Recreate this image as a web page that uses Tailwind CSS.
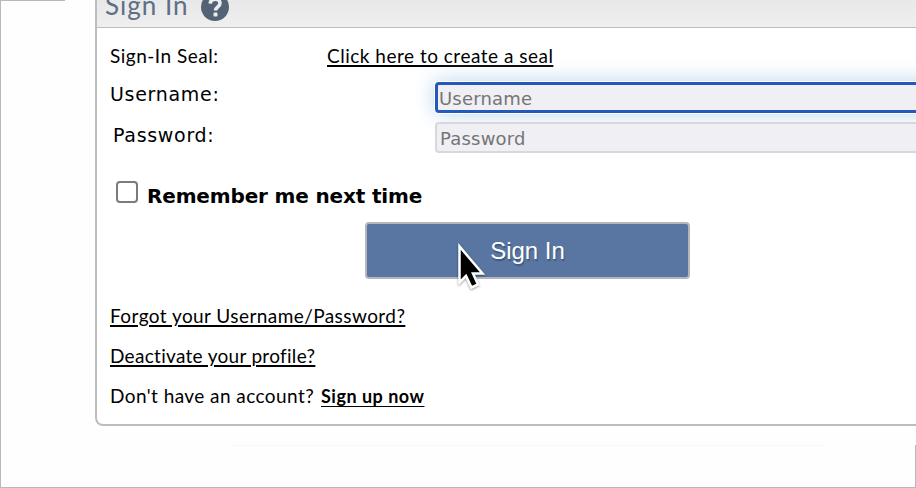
<!DOCTYPE html>
<html lang="en">
<head>
    <meta charset="UTF-8">
    <meta name="viewport" content="width=device-width, initial-scale=1.0">
    <title>Sign In</title>
    <script src="https://cdn.jsdelivr.net/npm/@tailwindcss/browser@4"></script>
</head>
<body class="bg-white">
    <div class="relative w-[916px] h-[488px] overflow-hidden border-l border-b border-[#b8b8b8] bg-[#fefefe] text-black">
      <!-- Page frame lines -->
      <div class="absolute top-0 left-0 w-16 h-px bg-[#b8b8b8]"></div>
      <div class="absolute top-[445px] left-[231px] w-[592px] h-px bg-[#f7f7f7]"></div>
      <div class="absolute bottom-0 right-0 w-px h-[42px] bg-[#b8b8b8]"></div>

      <main class="ml-[94px] w-[840px] h-[426px] border-2 border-t-0 border-[#bdbdbd] rounded-b-lg bg-white overflow-hidden">
        <header class="flex items-start h-7 bg-linear-to-b from-[#e8e8e8] to-[#efefef] border-b border-[#bdbdbd] pl-2">
          <h1 class="-mt-[10px] w-[96px] whitespace-nowrap font-[Lato,sans-serif] text-[26px] leading-[30px] tracking-[1px] text-[#5d6f84]">Sign In</h1>
          <svg class="-mt-[7px] w-7 h-7" viewBox="0 0 28 28">
            <circle cx="14" cy="14" r="14" fill="#536275"/>
            <path d="M9.2 10.6C9.5 7.6 11.5 6.2 14.3 6.2c2.8 0 4.7 1.6 4.7 4 0 3.8-4.500 3.500-4.500 7.300" fill="none" stroke="#ececec" stroke-width="3.600"/>
            <rect x="12.500" y="19.500" width="4" height="4" rx="1" fill="#ececec"/>
          </svg>
        </header>

        <form class="pl-[13px]">
          <div class="flex items-center h-[38px] pt-[18px] font-[Lato,sans-serif] text-[19px] leading-6">
            <span class="w-[217px] tracking-[0.5px]">Sign-In Seal:</span>
            <a href="#" class="tracking-[0.5px] underline decoration-[1.5px] underline-offset-[2px]">Click here to create a seal</a>
          </div>
          <div class="flex h-[38px] pt-4 font-['DejaVu_Sans',Verdana,sans-serif]">
            <label for="username" class="w-[325px] shrink-0 text-[19px] leading-6 tracking-[0.7px]">Username:</label>
            <input id="username" type="text" placeholder="Username" class="w-[520px] h-[31px] shrink-0 rounded border-[3px] border-[#2458bd] bg-[#efeff4] pl-px pt-px text-[18px] tracking-[0.2px] placeholder:text-[#757575] shadow-[0_0_0_1px_#fff,0_0_22px_#b4d0ea] outline-none">
          </div>
          <div class="relative flex h-[64px] pt-[18px] font-['DejaVu_Sans',Verdana,sans-serif]">
            <label for="password" class="w-[325px] shrink-0 pl-[3px] pt-px text-[19px] leading-6 tracking-[0.7px]">Password:</label>
            <input id="password" type="password" placeholder="Password" class="w-[520px] h-[31px] shrink-0 rounded border-2 border-[#d8d8da] bg-[#efeff4] pl-[3px] pt-px text-[18px] tracking-[0.2px] placeholder:text-[#757575] outline-none">
          </div>
          <div class="flex pt-[13px] h-[54px] pl-1.5">
            <input id="remember" type="checkbox" class="appearance-none w-[22px] h-[22px] border-2 border-[#7b7b7b] rounded bg-white">
            <label for="remember" class="pl-[9px] pt-[3px] font-['DejaVu_Sans',Verdana,sans-serif] text-[20px] leading-6 tracking-[-0.15px] font-bold">Remember me next time</label>
          </div>
          <div class="relative ml-[255px]">
            <button type="submit" class="block w-[325px] h-[57px] border-2 border-[#b3b7bb] rounded-[4px] bg-[#5876a1] font-['Liberation_Sans',Arial,sans-serif] text-[24px] text-white text-shadow-[1px_2px_1px_#40597d]">Sign In</button>
            <svg class="absolute left-[92px] top-[20px] w-[34px] h-[50px] drop-shadow-[0_1px_1px_#0006]" viewBox="0 0 34 50">
              <path d="M2.5 4.5v36l6.500-6.500 5.500 11.500 6.500-3-5-11h9.500Z" fill="#000" stroke="#fff" stroke-width="2.500"/>
            </svg>
          </div>
        </form>

        <nav class="flex flex-col gap-4 pl-[13px] pt-[25px] font-[Lato,sans-serif] text-[19px] leading-6">
          <a href="#" class="self-start tracking-[0.43px] underline decoration-[1.5px] underline-offset-[2px]">Forgot your Username/Password?</a>
          <a href="#" class="self-start tracking-[0.3px] underline decoration-[1.5px] underline-offset-[2px]">Deactivate your profile?</a>
          <p class="flex tracking-[0.43px]"><span class="w-[211px]">Don't have an account?</span><a href="#" class="font-bold text-[18px] tracking-[0.5px] underline decoration-1 underline-offset-[3px]">Sign up now</a></p>
        </nav>
      </main>
    </div>
</body>
</html>
